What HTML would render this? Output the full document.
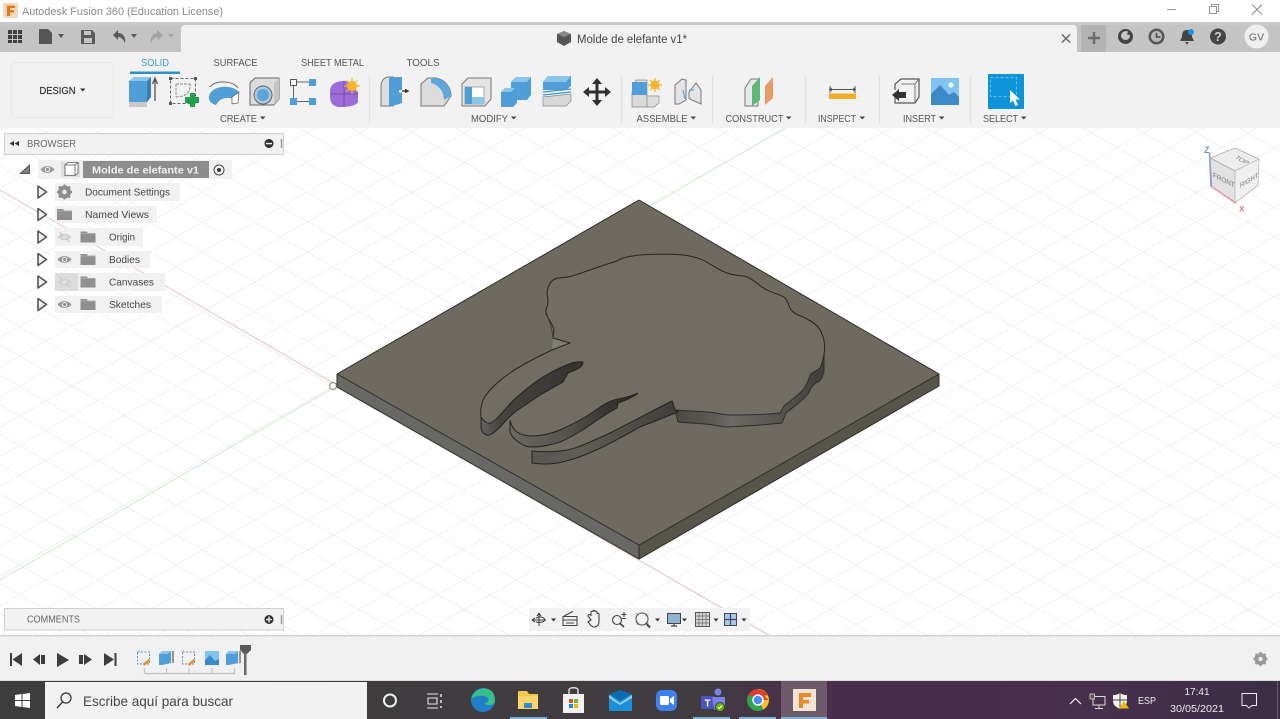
<!DOCTYPE html>
<html><head><meta charset="utf-8"><title>Autodesk Fusion 360</title>
<style>html,body{margin:0;padding:0;background:#fff;width:1280px;height:719px;overflow:hidden}svg{display:block}text{font-family:"Liberation Sans",sans-serif}</style></head>
<body>
<svg width="1280" height="719" viewBox="0 0 1280 719" xmlns="http://www.w3.org/2000/svg">
<defs>
<pattern id="grid" patternUnits="userSpaceOnUse" width="100" height="100" patternTransform="matrix(1.307 .745 1.307 -.745 333 386)">
<path d="M20 0V100M40 0V100M60 0V100M80 0V100M0 20H100M0 40H100M0 60H100M0 80H100" stroke="#f1f1f1" stroke-width=".7" fill="none"/>
<path d="M0 0V100M0 0H100" stroke="#e2e2e2" stroke-width=".8" fill="none"/>
</pattern>
<linearGradient id="tb" x1="0" x2="1" y1="0" y2="0"><stop offset="0" stop-color="#3d3d3d"/><stop offset=".55" stop-color="#413c40"/><stop offset=".65" stop-color="#4a2c4c"/><stop offset=".85" stop-color="#47304c"/><stop offset="1" stop-color="#3a2d44"/></linearGradient>
<linearGradient id="w3" x1="532" x2="680" y1="0" y2="0" gradientUnits="userSpaceOnUse"><stop offset="0" stop-color="#575550"/><stop offset=".3" stop-color="#605e57"/><stop offset="1" stop-color="#3f3d39"/></linearGradient>
<linearGradient id="w2" x1="509" x2="638" y1="0" y2="0" gradientUnits="userSpaceOnUse"><stop offset="0" stop-color="#6b6962"/><stop offset=".45" stop-color="#55534d"/><stop offset=".75" stop-color="#383734"/><stop offset="1" stop-color="#2f2e2c"/></linearGradient>
<linearGradient id="w1" x1="480" x2="583" y1="0" y2="0" gradientUnits="userSpaceOnUse"><stop offset="0" stop-color="#65635c"/><stop offset=".2" stop-color="#45443f"/><stop offset="1" stop-color="#33322f"/></linearGradient>
<linearGradient id="w4" x1="675" x2="825" y1="0" y2="0" gradientUnits="userSpaceOnUse"><stop offset="0" stop-color="#4c4a44"/><stop offset=".25" stop-color="#5c5a53"/><stop offset=".38" stop-color="#6d6a62"/><stop offset=".7" stop-color="#56534d"/><stop offset="1" stop-color="#3f3e39"/></linearGradient>
<g id="folder"><path d="M0 2h6l1.500 1.500H15V13H0z" fill="#8f8f8f"/><path d="M0 4h15" stroke="#bbb" stroke-width=".6"/></g>
<g id="eye"><path d="M-7 0C-4-4.500 4-4.500 7 0 4 4.500-4 4.500-7 0z" fill="#9a9a9a"/><circle r="2.600" fill="#eee"/><circle r="1.500" fill="#8a8a8a"/></g>
<g id="eyeoff"><path d="M-7 0C-4-4.500 4-4.500 7 0 4 4.500-4 4.500-7 0z" fill="#d2d2d2"/><path d="M-5-5L5 5" stroke="#c4c4c4" stroke-width="1.200"/><circle r="1.800" fill="#e6e6e6"/></g>
<path id="arr" d="M0 -6L8.500 0L0 6z" fill="#f1f1f1" stroke="#555" stroke-width="1.600" stroke-linejoin="round"/>
<g id="sk"><path d="M-6-6H6V6H-6z" fill="none" stroke="#5f8fb5" stroke-width="1" stroke-dasharray="2 1.500"/><path d="M0 7L6 2" stroke="#e8912d" stroke-width="2.500"/></g>
<g id="bx"><path d="M-7-4L-4-7H5V5L-4 7H-7z" fill="#4f9ed8"/><path d="M-4-7H5L2-4H-7z" fill="#8fc4ea"/><path d="M7-7V5" stroke="#555" stroke-width="1.200"/></g>
</defs>

<!-- canvas -->
<rect width="1280" height="719" fill="#fff"/>
<rect y="128" width="1280" height="508" fill="url(#grid)"/>
<path d="M0 190L770 636" stroke="#e8c4c4" stroke-width="1" fill="none"/>
<path d="M0 580L785 128" stroke="#d0e8d0" stroke-width="1" fill="none"/>
<circle cx="333" cy="386" r="3.500" fill="#fff" stroke="#9aa89a" stroke-width="1.500"/>

<!-- plate -->
<path d="M337 374L639 545V559L337 387z" fill="#686864"/>
<path d="M639 545L939 374V386L639 559z" fill="#575449"/>
<path d="M639 200L939 374L639 545L337 374z" fill="#6e6a60"/>
<path d="M639 200L939 374M639 200L337 374" stroke="#2b2b29" stroke-width="1" fill="none"/>
<path d="M337 374L639 545L939 374M639 545V559M337 374V387L639 559L939 386V374" stroke="#2e2e2c" stroke-width="1" fill="none"/>

<!-- raised silhouette -->
<path id="top" d="M640 255C655 254 672 254 683 255C692 256 698 258 703 260C712 265 720 271 727 273C735 276 742 275 747 277C755 280 760 287 767 290C774 294 781 294 785 298C789 302 788 307 792 311C797 316 803 316 807 319C815 323 820 328 822 334C825 341 825 348 824 354C823 360 822 364 820 368C815 372 812 372 810 375C808 382 806 386 803 390C796 397 790 401 784 406L780 413C765 415 745 415 730 415C722 415 714 412 707 412C697 411 686 411 675 410L672 401C650 412 630 423 610 433C590 442 575 450 560 451L532 451L510 432L489 435L481 428L481 416C480 411 481 406 483 400C487 392 497 382 510 373C520 366 535 358 552 350L553 338L554 330L545 310L548 300L547 293C548 286 550 281 555 279C560 277 566 278 572 276C585 272 600 266 617 261C621 258 630 256 640 255Z" fill="#716d63"/>
<!-- right walls -->
<path d="M675 410C686 411 697 411 707 412C714 412 722 415 730 415C745 415 765 415 780 413L784 406C790 401 796 397 803 390C806 386 808 382 810 375C812 372 815 372 820 368C822 364 823 360 824 354L824 372C822 378 821 380 818 382C813 384 811 388 808 394C800 403 792 408 786 413L782 423C765 425 745 426 728 427C720 427 712 424 705 424C696 423 687 423 678 422Z" fill="url(#w4)" stroke="#2a2a28" stroke-width=".9"/>
<!-- third wall -->
<path d="M672 401C650 412 630 423 610 433C590 442 575 450 560 451C550 452 540 452 532 451L532 463C545 465 556 464 566 461C590 455 615 441 640 427L678 412L675 410Z" fill="url(#w3)" stroke="#222220" stroke-width="1"/>
<!-- finger 2 wall -->
<path d="M638 393C632 396 628 397 623 398C617 399 612 400 607 403C601 406 598 409 593 412C583 419 571 425 560 430C550 434 541 436 532 436C525 436 520 434 517 432C513 429 511 425 510 420L510 432C512 437 516 441 520 443C524 446 528 447 532 447C542 447 551 445 560 442C572 437 583 430 593 423C603 416 610 412 617 408L618 403C626 400 634 397 638 393Z" fill="url(#w2)" stroke="#222220" stroke-width="1"/>
<!-- finger 1 wall -->
<path d="M583 362C578 361 570 363 562 367C555 370 550 373 543 377C533 383 525 390 517 397C510 403 505 410 500 415C497 419 494 421 491 423C488 424 484 422 481 417L481 428C482 433 486 436 489 435C493 434 497 430 501 426C506 420 510 416 515 412C525 405 533 400 540 395L563 382L568 373C575 370 583 368 583 362Z" fill="url(#w1)" stroke="#222220" stroke-width="1"/>
<!-- notch -->
<path d="M546 309L549 322L553 338L552 350L570 343L553 338" fill="#8d8b83" stroke="none" opacity=".55"/>
<!-- outlines -->
<path d="M675 410L672 401M640 255C655 254 672 254 683 255C692 256 698 258 703 260C712 265 720 271 727 273C735 276 742 275 747 277C755 280 760 287 767 290C774 294 781 294 785 298C789 302 788 307 792 311C797 316 803 316 807 319C815 323 820 328 822 334C825 341 825 348 824 354M640 255C630 256 621 258 617 261C600 266 585 272 572 276C566 278 560 277 555 279C550 281 548 286 547 293C548 300 549 303 546 309C545 316 552 322 554 330L553 338L570 343L552 350C535 358 520 366 510 373C497 382 487 392 483 400C481 406 480 411 481 416" stroke="#242423" stroke-width="1" fill="none"/>
<path d="M545 313C550 320 552 328 553 338" stroke="#3a3a38" stroke-width=".8" fill="none"/>

<!-- title bar -->
<rect width="1280" height="22" fill="#fff"/>
<rect x="3" y="3" width="15" height="15" rx="1" fill="#f3d8bf"/>
<path d="M7 16V5.500H15V8H10V10H14V12.500H10V16z" fill="#e2791e"/>
<text x="22" y="15" font-size="11" fill="#8a8a8a" textLength="201" lengthAdjust="spacingAndGlyphs">Autodesk Fusion 360 (Education License)</text>
<path d="M1167 9.500H1176" stroke="#999" stroke-width="1"/>
<path d="M1209.500 6.500h7v7h-7zM1211.500 6.500v-2h7v7h-2" fill="none" stroke="#999" stroke-width="1"/>
<path d="M1252 4.500L1262 14.500M1262 4.500L1252 14.500" stroke="#8c8c8c" stroke-width="1"/>

<!-- tab bar -->
<rect y="22" width="1280" height="3" fill="#c9c9c9"/>
<rect y="25" width="1280" height="27" fill="#c4c4c4"/>
<path d="M181 52V29Q181 25 185 25H1073Q1077 25 1077 29V52z" fill="#f1f1f1"/>
<g fill="#3f3f3f"><path d="M8 30h4v4H8zM13 30h4v4h-4zM18 30h4v4h-4zM8 35h4v4H8zM13 35h4v4h-4zM18 35h4v4h-4zM8 40h4v3H8zM13 40h4v3h-4zM18 40h4v3h-4z"/></g>
<path d="M39 29H48L52 33V44H39z" fill="#555"/><path d="M58 34h6l-3 4z" fill="#555"/>
<path d="M81 30H92L95 33V44H81z" fill="#5a5a5a"/><rect x="84" y="31" width="7" height="4" fill="#c4c4c4"/><rect x="84" y="38" width="8" height="5" fill="#c4c4c4"/>
<path d="M113 35L118 30V33C123 33 126 37 125 43C123 39 121 37 118 37V40z" fill="#5a5a5a"/><path d="M131 34h6l-3 4z" fill="#5a5a5a"/>
<path d="M163 35L157 30V33C153 33 150 38 151 43C153 39 155 37 158 37V40z" fill="#a2a2a2"/><path d="M168 34h6l-3 4z" fill="#a2a2a2"/>
<path d="M564 31L571 34V42L564 46L557 42V34z" fill="#555"/><path d="M557 34L564 37L571 34L564 31z" fill="#8a8a8a"/>
<text x="577" y="43" font-size="11.500" fill="#444" textLength="110" lengthAdjust="spacingAndGlyphs">Molde de elefante v1*</text>
<path d="M1062 34.500L1070 42.500M1070 34.500L1062 42.500" stroke="#666" stroke-width="1.500"/>
<rect x="1081" y="25" width="25" height="27" fill="#b3b3b3"/>
<path d="M1094 32V44M1088 38H1100" stroke="#6a6a6a" stroke-width="2.500"/>
<circle cx="1125.500" cy="36.500" r="7.500" fill="#444"/><path d="M1121 36a5 5 0 0 1 7-4.500l-1 3 3 .5a4.500 4.500 0 1 1-9 1z" fill="#c4c4c4"/>
<circle cx="1156.500" cy="36.500" r="8" fill="#555"/><circle cx="1156.500" cy="36.500" r="5.500" fill="#b8b8b8"/><path d="M1156.500 33v4h4" stroke="#444" stroke-width="1.500" fill="none"/>
<path d="M1187 30C1183 30 1182 33 1182 37L1180 41H1194L1192 37C1192 33 1191 30 1187 30zM1185 42h4l-2 2.500z" fill="#444"/><circle cx="1191" cy="32" r="3" fill="#2090d8"/>
<circle cx="1218" cy="36.500" r="8" fill="#454545"/><text x="1218" y="41" font-size="12.500" font-weight="bold" fill="#d0d0d0" text-anchor="middle">?</text>
<circle cx="1256.500" cy="36.500" r="12" fill="#efefef"/><text x="1256.500" y="40.500" font-size="10.500" fill="#666" text-anchor="middle">GV</text>

<!-- ribbon -->
<rect y="52" width="1280" height="76" fill="#f2f2f2"/>
<rect x="11.500" y="62.500" width="102" height="55" rx="3" fill="#f2f2f2" stroke="#e9e9e9" stroke-width="1.200"/>
<text x="39.500" y="94" font-size="10" font-weight="normal" fill="#333" textLength="36" lengthAdjust="spacingAndGlyphs" stroke="#333" stroke-width=".2">DESIGN</text><path d="M80 88.500h5.500l-2.750 3z" fill="#333"/>
<text x="141" y="66" font-size="10.500" fill="#3a9ad9" textLength="28" lengthAdjust="spacingAndGlyphs">SOLID</text>
<rect x="130" y="71.500" width="50" height="2.500" fill="#2f8fca"/>
<text x="213.500" y="66" font-size="10.500" fill="#555" textLength="44" lengthAdjust="spacingAndGlyphs">SURFACE</text>
<text x="301" y="66" font-size="10.500" fill="#555" textLength="63" lengthAdjust="spacingAndGlyphs">SHEET METAL</text>
<text x="406.500" y="66" font-size="10.500" fill="#555" textLength="33" lengthAdjust="spacingAndGlyphs">TOOLS</text>
<g stroke="#e0e0e0" stroke-width="1.200"><path d="M369.500 76V123M621.500 76V123M712.500 76V123M805.500 76V123M879.500 76V123M970.500 76V123"/></g>
<g font-size="10.500" fill="#555">
<text x="220" y="122" textLength="37" lengthAdjust="spacingAndGlyphs">CREATE</text>
<text x="471" y="122" textLength="37" lengthAdjust="spacingAndGlyphs">MODIFY</text>
<text x="636.500" y="122" textLength="51" lengthAdjust="spacingAndGlyphs">ASSEMBLE</text>
<text x="725.500" y="122" textLength="58" lengthAdjust="spacingAndGlyphs">CONSTRUCT</text>
<text x="818" y="122" textLength="38" lengthAdjust="spacingAndGlyphs">INSPECT</text>
<text x="903" y="122" textLength="33" lengthAdjust="spacingAndGlyphs">INSERT</text>
<text x="983" y="122" textLength="35" lengthAdjust="spacingAndGlyphs">SELECT</text>
</g>
<g fill="#444"><path d="M260 116.500h5.500l-2.750 3zM511 116.500h5.500l-2.750 3zM690.500 116.500h5.500l-2.750 3zM786 116.500h5.500l-2.750 3zM859.500 116.500h5.500l-2.750 3zM939 116.500h5.500l-2.750 3zM1021 116.500h5.500l-2.750 3z"/></g>

<!-- extrude -->
<path d="M129 102H147V107H129z" fill="#c8c8c8"/><path d="M129 81L134 77H151V97L147 102H129z" fill="#4f9ed8"/><path d="M129 81L134 77H151L147 81z" fill="#8cc4ec"/><path d="M147 81L151 77V97L147 102z" fill="#3a7fb8"/>
<path d="M155 101V80M152.500 84L155 78L157.500 84" stroke="#555" stroke-width="1.300" fill="none"/>
<!-- sketch -->
<rect x="170.500" y="78.500" width="25" height="25" fill="none" stroke="#666" stroke-width="1" stroke-dasharray="3 2"/>
<g fill="#555"><rect x="169" y="77" width="3" height="3"/><rect x="194" y="77" width="3" height="3"/><rect x="169" y="102" width="3" height="3"/></g>
<path d="M176 84V97M176 84H190M176 97C186 97 191 92 190 84" stroke="#888" stroke-width=".9" fill="none" stroke-dasharray="3 1"/>
<path d="M190 97H185V103H190V107H195V103H199V97H195V93H190z" fill="#1ea14a"/>
<!-- form -->
<path d="M210 87C215 80 232 80 238 88" stroke="#666" stroke-width="1" fill="none"/>
<path d="M209 96C212 85 232 84 239 92L238 102C232 96 220 96 216 105C212 104 208 101 209 96z" fill="#4f9ed8"/><path d="M232 97L239 92L238 103L232 104z" fill="#fff" stroke="#555" stroke-width=".7"/>
<!-- hole -->
<path d="M250 83L255 78H279V99L274 105H250z" fill="#dcdcdc" stroke="#666" stroke-width="1"/><path d="M274 83L279 78V99L274 105z" fill="#c4c4c4"/>
<circle cx="263" cy="95" r="9" fill="#a9c9e0" stroke="#666" stroke-width="1"/><circle cx="263" cy="95" r="6" fill="#5fa4d8"/>
<!-- pattern/nodes -->
<rect x="290.500" y="79.500" width="6" height="6" fill="#fff" stroke="#555"/><rect x="309" y="79" width="7" height="7" fill="#4f9ed8"/><rect x="290" y="98" width="7" height="7" fill="#4f9ed8"/><rect x="309" y="98" width="7" height="7" fill="#4f9ed8"/>
<path d="M297 82H309M293.500 86V98M297 101.500H309" stroke="#666" stroke-width="1"/>
<!-- mesh purple -->
<path d="M330 90C331 83 338 80 348 81L358 92V102C356 106 348 107 340 107C333 107 330 103 330 96z" fill="#9c6cd8"/><path d="M344 81V107M331 94H358" stroke="#7a4cb4" stroke-width="1"/>
<circle cx="352" cy="86" r="5" fill="#f7b32a"/><path d="M352 78V94M344 86H360M346.500 80.500L357.500 91.500M357.500 80.500L346.500 91.500" stroke="#f7b32a" stroke-width="1.200"/>

<!-- modify icons -->
<path d="M381 106V87C381 81 384 77 389 77H393V106z" fill="#dedede" stroke="#777" stroke-width="1"/><path d="M389 77H402V103L393 106H389z" fill="#4f9ed8"/><path d="M400 91H407M405 89.500L408 91L405 92.500" stroke="#333" stroke-width="1.300" fill="none"/><rect x="399" y="90" width="3" height="2.500" fill="#fff"/>
<path d="M421 106V84L428 78H436C446 80 451 88 451 96L444 106z" fill="#dcdcdc" stroke="#777" stroke-width="1"/><path d="M431 78H436C445 80 451 87 451 96L444 100C444 92 439 85 431 83z" fill="#5fa8de"/>
<path d="M462 106V84L468 78H491V99L485 106z" fill="#e4e4e4" stroke="#777" stroke-width="1"/><rect x="465" y="87" width="19" height="17" fill="#fff" stroke="#888" stroke-width=".7"/><path d="M465 87H472V97H484V104H465z" fill="#4f9ed8"/><path d="M472 97H484V104H472z" fill="#8cc4ec"/>
<path d="M501 92L505 88H511V82L516 77H531V95L527 100H517V103L513 107H501z" fill="#4f9ed8"/><path d="M511 82L516 77H531L527 82zM501 92L505 88H515L511 92z" fill="#8cc4ec"/>
<path d="M543 82L548 76H571V86L566 90H543z" fill="#4f9ed8"/><path d="M543 82L548 76H571L566 82z" fill="#8cc4ec"/><path d="M543 92L571 89M543 95L571 92" stroke="#3f94cf" stroke-width="1.200"/><path d="M543 97L571 94V101L566 106H543z" fill="#d8d8d8" stroke="#888" stroke-width=".7"/>
<path d="M597 78L602 84H598.500V90.500H605V87L611 92L605 97V93.500H598.500V100H602L597 106L592 100H595.500V93.500H589V97L583 92L589 87V90.500H595.500V84H592z" fill="#2f2f2f"/>

<!-- assemble -->
<path d="M632 92L636 80H647V107H632z" fill="#dadada" stroke="#888" stroke-width=".7"/><path d="M632 82H647V95H632z" fill="#4f9ed8"/><path d="M647 96H659V103L654 107H647z" fill="#dedede" stroke="#888" stroke-width=".7"/>
<circle cx="655" cy="85" r="4.500" fill="#f7b32a"/><path d="M655 78V92M648 85H662M650 80L660 90M660 80L650 90" stroke="#f7b32a" stroke-width="1.200"/>
<path d="M675 104V85L682 79L686 80V100L679 104z" fill="#e4e4e4" stroke="#777" stroke-width="1"/><path d="M689 92L696 83L701 90V104L692 100L689 98z" fill="#e4e4e4" stroke="#777" stroke-width="1"/><path d="M683 90L685 99M689 90H694" stroke="#5fa8de" stroke-width="1.200"/>
<!-- construct -->
<path d="M745 106V88L751 79H758V106z" fill="#e8e8e8" stroke="#777" stroke-width="1"/><path d="M752 86L760 77V100L752 106z" fill="#5fb87a"/><path d="M765 86L773 77V98L765 105z" fill="#e89a66"/>
<!-- inspect -->
<path d="M830 86V93M855 86V93M830 89.500H855M832 88L829.500 89.500L832 91M853 88L855.500 89.500L853 91" stroke="#555" stroke-width="1" fill="none"/><rect x="829" y="93.500" width="27" height="5.500" fill="#f3ac24"/>
<!-- insert -->
<path d="M895 90V84L901 79H919V97L915 103H895V97" fill="#f2f2f2" stroke="#555" stroke-width="1.200"/><path d="M915 84L919 79M915 84V103M901 84H915" stroke="#555" stroke-width=".8" fill="none"/>
<path d="M892 95L899 89V92H906V98H899V101z" fill="#333"/>
<rect x="931" y="78" width="28" height="27" fill="#7fc3ee"/><path d="M931 105V94L940 85L949 95L954 92L959 97V105z" fill="#3c8ac8"/><circle cx="951" cy="85" r="2.700" fill="#e8f4fc"/>
<!-- select -->
<rect x="988" y="74" width="36" height="35" fill="#0f93d8"/><rect x="990.500" y="77.500" width="26" height="19" fill="none" stroke="#66c2ee" stroke-width="1" stroke-dasharray="3 2"/>
<path d="M1010 90V103L1013 100.500L1015.500 106L1018 105L1015.500 99.500H1020z" fill="#fff"/>

<!-- browser panel -->
<rect x="4.500" y="133.500" width="279" height="21" fill="#f2f2f2" stroke="#cfcfcf"/>
<path d="M14 141L9.500 143.500L14 146zM19 141L14.500 143.500L19 146z" fill="#333"/>
<text x="27" y="147" font-size="10.500" fill="#666" textLength="49" lengthAdjust="spacingAndGlyphs">BROWSER</text>
<circle cx="269" cy="143.500" r="4.500" fill="#2e2e2e"/><rect x="266" y="142.800" width="6" height="1.500" fill="#eee"/>
<path d="M281.500 139V148" stroke="#999" stroke-width="1.500"/>
<rect x="38" y="160" width="194" height="19" fill="#f1f1f1"/>
<path d="M19 174L30 164V174z" fill="#5a5a5a"/><path d="M22 173L29 166.500V173z" fill="#fff" opacity=".25"/>
<use href="#eye" x="47.500" y="169.500"/>
<rect x="61" y="162" width="19" height="15" fill="#ddd"/>
<path d="M65 165L68 162.500H78V173L75 175.500H65z" fill="#fff" stroke="#555" stroke-width=".8"/><path d="M65 165H75V175.500M75 165L78 162.500" stroke="#555" stroke-width=".8" fill="none"/>
<rect x="83" y="161" width="126" height="17" fill="#8d8d8d"/>
<text x="92" y="173.500" font-size="10.500" font-weight="bold" fill="#f2f2f2" textLength="107" lengthAdjust="spacingAndGlyphs">Molde de elefante v1</text>
<circle cx="219" cy="170" r="5" fill="#f5f5f5" stroke="#444"/><circle cx="219" cy="170" r="2" fill="#333"/>

<g fill="#f1f1f1"><rect x="55" y="183" width="125" height="18"/><rect x="55" y="206" width="102" height="17"/><rect x="55" y="228" width="88" height="18"/><rect x="55" y="251" width="95" height="17"/><rect x="55" y="273" width="110" height="18"/><rect x="55" y="296" width="107" height="17"/></g>
<rect x="55" y="273" width="23" height="18" fill="#dcdcdc"/>
<use href="#arr" x="38" y="192"/><use href="#arr" x="38" y="214.500"/><use href="#arr" x="38" y="237"/><use href="#arr" x="38" y="259.500"/><use href="#arr" x="38" y="282"/><use href="#arr" x="38" y="304.500"/>
<circle cx="64.500" cy="192" r="5" fill="none" stroke="#8c8c8c" stroke-width="3"/><path d="M64.500 184.500V199.500M57 192H72M59 186.500L70 197.500M70 186.500L59 197.500" stroke="#8c8c8c" stroke-width="2"/><circle cx="64.500" cy="192" r="2.200" fill="#f1f1f1"/>
<use href="#folder" x="57" y="207"/><use href="#folder" x="80.500" y="229.500"/><use href="#folder" x="80.500" y="252"/><use href="#folder" x="80.500" y="274.500"/><use href="#folder" x="80.500" y="297"/>
<use href="#eyeoff" x="64.500" y="237"/><use href="#eye" x="64.500" y="259.500"/><use href="#eyeoff" x="64.500" y="282"/><use href="#eye" x="64.500" y="304.500"/>
<g font-size="10.500" fill="#444">
<text x="85" y="195.500" textLength="85" lengthAdjust="spacingAndGlyphs">Document Settings</text>
<text x="85" y="218" textLength="64" lengthAdjust="spacingAndGlyphs">Named Views</text>
<text x="109" y="240.500" textLength="26" lengthAdjust="spacingAndGlyphs">Origin</text>
<text x="109" y="263" textLength="31" lengthAdjust="spacingAndGlyphs">Bodies</text>
<text x="109" y="285.500" textLength="45" lengthAdjust="spacingAndGlyphs">Canvases</text>
<text x="109" y="308" textLength="42" lengthAdjust="spacingAndGlyphs">Sketches</text>
</g>

<!-- view cube -->
<path d="M1235 148L1259 159L1235 171L1210 158z" fill="#ededed" stroke="#aaa" stroke-width=".8"/>
<path d="M1210 158L1235 171V203L1212 187z" fill="#e2e2e2" stroke="#aaa" stroke-width=".8"/>
<path d="M1235 171L1259 159L1258 185L1235 203z" fill="#f0f0f0" stroke="#bbb" stroke-width=".8"/>
<path d="M1211 187L1209.500 153" stroke="#8e96d8" stroke-width="1.500"/><path d="M1212 187L1236 203" stroke="#e59a9a" stroke-width="1.500"/>
<text x="1204" y="153" font-size="9" font-weight="bold" fill="#7d86cf">Z</text><text x="1239" y="212" font-size="8" font-weight="bold" fill="#e07c7c">X</text>
<text transform="matrix(.9 .45 0 1 1213 177)" font-size="7" fill="#777">FRONT</text>
<text transform="matrix(.85 -.5 0 1 1240 188)" font-size="7" fill="#777">RIGHT</text>
<text transform="matrix(.85 .45 -.85 .45 1234 158)" font-size="7" fill="#777">TOP</text>

<!-- comments -->
<rect x="4.500" y="608.500" width="279" height="21.500" fill="#f2f2f2" stroke="#cfcfcf"/>
<text x="27" y="622.500" font-size="10.500" fill="#666" textLength="53" lengthAdjust="spacingAndGlyphs">COMMENTS</text>
<circle cx="269" cy="619.500" r="4.500" fill="#2e2e2e"/><path d="M266 619.500H272M269 616.500V622.500" stroke="#eee" stroke-width="1.400"/>
<path d="M281.500 615V624" stroke="#999" stroke-width="1.500"/>

<!-- nav bar -->
<rect x="529" y="608" width="221" height="23" fill="#f2f2f2"/>
<g stroke="#444" stroke-width="1.100" fill="none">
<path d="M539 613V626M532 620H546M539 613L537 616M539 613L541 616M532 620L535 618M532 620L535 622M544 620"/><path d="M536 618C540 616 544 617 545 620C544 622 540 623 536 622"/>
<path d="M563 616.500H577V625.500H563zM563 620H577M566 623H574M564 616L573 611.500" />
<path d="M591 620L588 616C588 614 590 614 591 616V612C591 611 593 611 593 612V611C593 610 595 610 595 611V612C595 611 597 611 597 612V614C597 613 599 613 599 614V621C599 625 597 627 594 627C591 627 590 624 588 622Z"/>
<circle cx="617" cy="620" r="4.500"/><path d="M620 623.500L624 627" stroke-width="1.600"/><path d="M624 612V617M621.500 614.500H626.500M622 618.500H626"/>
<circle cx="642" cy="619" r="6"/><path d="M646 623.500L650 627.500" stroke-width="2"/>
</g>
<path d="M636 613.500h12v11h-12z" fill="none" stroke="#999" stroke-width=".7" stroke-dasharray="1.500 1.500"/>
<rect x="667.500" y="613.500" width="13" height="10" fill="#8fb3d0" stroke="#444"/><path d="M671 626H677M674 624V626" stroke="#444" stroke-width="1.200"/>
<rect x="695.500" y="612.500" width="14" height="14" fill="#d8d8d8" stroke="#555"/><path d="M695 616H710M695 619.500H710M695 623H710M699 612V627M702.500 612V627M706 612V627" stroke="#666" stroke-width=".7"/>
<rect x="724.500" y="613.500" width="12" height="12" fill="#a8c8e4" stroke="#446"/><path d="M724 619.500H737M730.500 613V626" stroke="#446" stroke-width="1.200"/>
<g fill="#333"><path d="M551 618.500h5l-2.500 3zM655 618.500h5l-2.500 3zM682 618.500h5l-2.500 3zM713.500 618.500h5l-2.500 3zM741.500 618.500h5l-2.500 3z"/></g>

<!-- timeline -->
<rect y="636" width="1280" height="45" fill="#f1f1f1"/>
<rect y="635" width="1280" height="1.500" fill="#d2d2d2"/>
<rect y="680" width="1280" height="1" fill="#dcdcdc"/>
<g fill="#3c3c3c">
<path d="M10 653H12V666H10zM22 653V666L12.500 659.500z"/>
<path d="M33 659.500L40 654V665zM41 655H45V664H41z"/>
<path d="M57 653V667L69 660z"/>
<path d="M79 655H83V664H79zM84 654L92 659.500L84 665z" />
<path d="M104 653V666L114 659.500zM114.500 653H116.500V666H114.500z"/>
</g>
<use href="#sk" x="143.500" y="658"/><use href="#bx" x="166" y="658"/><use href="#sk" x="188.500" y="658"/>
<rect x="205" y="651" width="14" height="14" fill="#7fc3ee"/><path d="M205 665V660L210 655L215 661L219 659V665z" fill="#3c8ac8"/>
<use href="#bx" x="233" y="658"/>
<path d="M144.500 673.500H235M144.500 668V673M166.500 668V673M189 668V673M212 668V673M234.500 668V673" stroke="#c0c0c0" stroke-width="1.200" fill="none"/>
<path d="M240 645H251V650L247 654H244L240 650z" fill="#595959"/><rect x="244" y="652" width="2.500" height="23" fill="#666"/>
<g><circle cx="1260.500" cy="659" r="4.500" fill="none" stroke="#999" stroke-width="3"/><path d="M1260.500 652V666M1253.500 659H1267.500M1255.500 654L1265.500 664M1265.500 654L1255.500 664" stroke="#999" stroke-width="2.200"/><circle cx="1260.500" cy="659" r="2" fill="#f1f1f1"/></g>

<!-- taskbar -->
<rect y="681" width="1280" height="38" fill="url(#tb)"/>
<rect x="45" y="682" width="322" height="37" fill="#f2f2f2"/>
<path d="M15 695L21.500 694V700H15zM22.500 694L30 693V700H22.500zM15 701H21.500V707L15 706zM22.500 701H30V708L22.500 707z" fill="#fff"/>
<circle cx="66" cy="698" r="5" fill="none" stroke="#333" stroke-width="1.200"/><path d="M62.500 702L57 708" stroke="#333" stroke-width="1.300"/>
<text x="83" y="706" font-size="14" fill="#444" textLength="150" lengthAdjust="spacingAndGlyphs">Escribe aquí para buscar</text>
<circle cx="390" cy="700.500" r="6" fill="none" stroke="#f0f0f0" stroke-width="2"/>
<g stroke="#e8e8e8" stroke-width="1.100" fill="none"><path d="M427 694H438M428 698H437V704H428zM427 708H438"/><path d="M441 694V697M441 700V703M441 706V708" stroke-width="1.500"/></g>
<circle cx="483" cy="700" r="12" fill="#1f7fc8"/><path d="M471 700C473 690 483 686 490 690C494 692 495 697 495 701C495 706 486 706 484 703C490 703 490 697 484 696C477 695 472 697 471 700z" fill="#36c08a"/>
<path d="M518 691H527L529 694H538V709H518z" fill="#f5c64b"/><path d="M518 696H538V709H518z" fill="#fbd56b"/><rect x="524" y="703" width="8" height="5" fill="#3c8ac8"/>
<rect x="563" y="694" width="21" height="19" fill="#f2f2f2"/><path d="M569 694V690C569 687 578 687 578 690V694" fill="none" stroke="#ddd" stroke-width="1.400"/><rect x="569" y="699" width="4" height="4" fill="#e2502a"/><rect x="574" y="699" width="4" height="4" fill="#6eb72a"/><rect x="569" y="704" width="4" height="4" fill="#1a8fe3"/><rect x="574" y="704" width="4" height="4" fill="#f7b800"/>
<path d="M609 695L620 690L632 695V711H609z" fill="#1d8fd8"/><path d="M609 695L620 703L632 695V698L620 705L609 698z" fill="#8fd0f5"/><path d="M609 694L620 690L632 694L620 701z" fill="#0a6cb0"/>
<rect x="656" y="690" width="21" height="21" rx="6" fill="#3d82ee"/><rect x="660" y="696" width="9" height="9" rx="1.500" fill="#fff"/><path d="M670 699L674 696V705L670 702z" fill="#fff"/>
<rect x="701" y="696" width="13" height="13" rx="1" fill="#4b53bc"/><text x="707.500" y="706.500" font-size="10" font-weight="bold" fill="#fff" text-anchor="middle">T</text>
<circle cx="718" cy="692" r="3.500" fill="#7b83eb"/><path d="M712 697H725V706C725 710 714 711 714 709z" fill="#7b83eb"/><circle cx="720" cy="707" r="4.500" fill="#6bb700" stroke="#3d3d3d"/><path d="M718 707L719.500 708.500L722 705.500" stroke="#fff" fill="none" stroke-width="1"/>
<circle cx="758" cy="700" r="11" fill="#e33b2e"/><path d="M758 700L748.500 694.500A11 11 0 0 0 763.500 709.500z" fill="#2ea44f"/><path d="M758 689A11 11 0 0 1 763.500 709.500L758 700H768.500z" fill="#f6c02c"/><path d="M749 694.500A11 11 0 0 1 768 695.500H758z" fill="#e33b2e"/><circle cx="758" cy="700" r="5" fill="#4a8ef0" stroke="#fff" stroke-width="1.500"/>
<rect x="781" y="681" width="46" height="38" fill="#6c5a6a"/>
<rect x="793" y="689" width="23" height="22" fill="#f6e4d2"/><path d="M799 708V693H811V697H803V700H809V703.500H803V708z" fill="#e88a2c"/>
<g fill="#7eb3d8"><rect x="510" y="717" width="37" height="2"/><rect x="693" y="717" width="37" height="2"/><rect x="739" y="717" width="37" height="2"/><rect x="781" y="717" width="46" height="2"/></g>
<path d="M1070 704L1075.500 698.500L1081 704" stroke="#eee" stroke-width="1.200" fill="none"/>
<path d="M1093 696.500H1105V705H1093zM1099 705V708.500M1095 708.500H1103" stroke="#ddd" stroke-width="1" fill="none"/><rect x="1090" y="694" width="4.500" height="5" fill="#555" stroke="#ddd" stroke-width=".8"/>
<path d="M1120 693C1117 695 1115 695 1113 695V701C1113 705 1116 707 1120 709C1124 707 1127 705 1127 701V695C1125 695 1123 695 1120 693z" fill="#f2f2f2"/><path d="M1120 693V709M1113 700H1127" stroke="#444" stroke-width="1"/><path d="M1124 701L1129 708.500H1119z" fill="#f2b705"/>
<text x="1138" y="704" font-size="10.500" fill="#eee" textLength="18" lengthAdjust="spacingAndGlyphs">ESP</text>
<text x="1197" y="695" font-size="10.500" fill="#eee" text-anchor="middle" textLength="25" lengthAdjust="spacingAndGlyphs">17:41</text>
<text x="1197" y="712" font-size="10.500" fill="#eee" text-anchor="middle" textLength="54" lengthAdjust="spacingAndGlyphs">30/05/2021</text>
<path d="M1242 693.500H1256.500V705.500H1252L1249 708L1246.500 705.500H1242z" fill="none" stroke="#eee" stroke-width="1"/>
<path d="M1277.500 681V719" stroke="#6a5a70" stroke-width="1"/>
</svg>
</body></html>
